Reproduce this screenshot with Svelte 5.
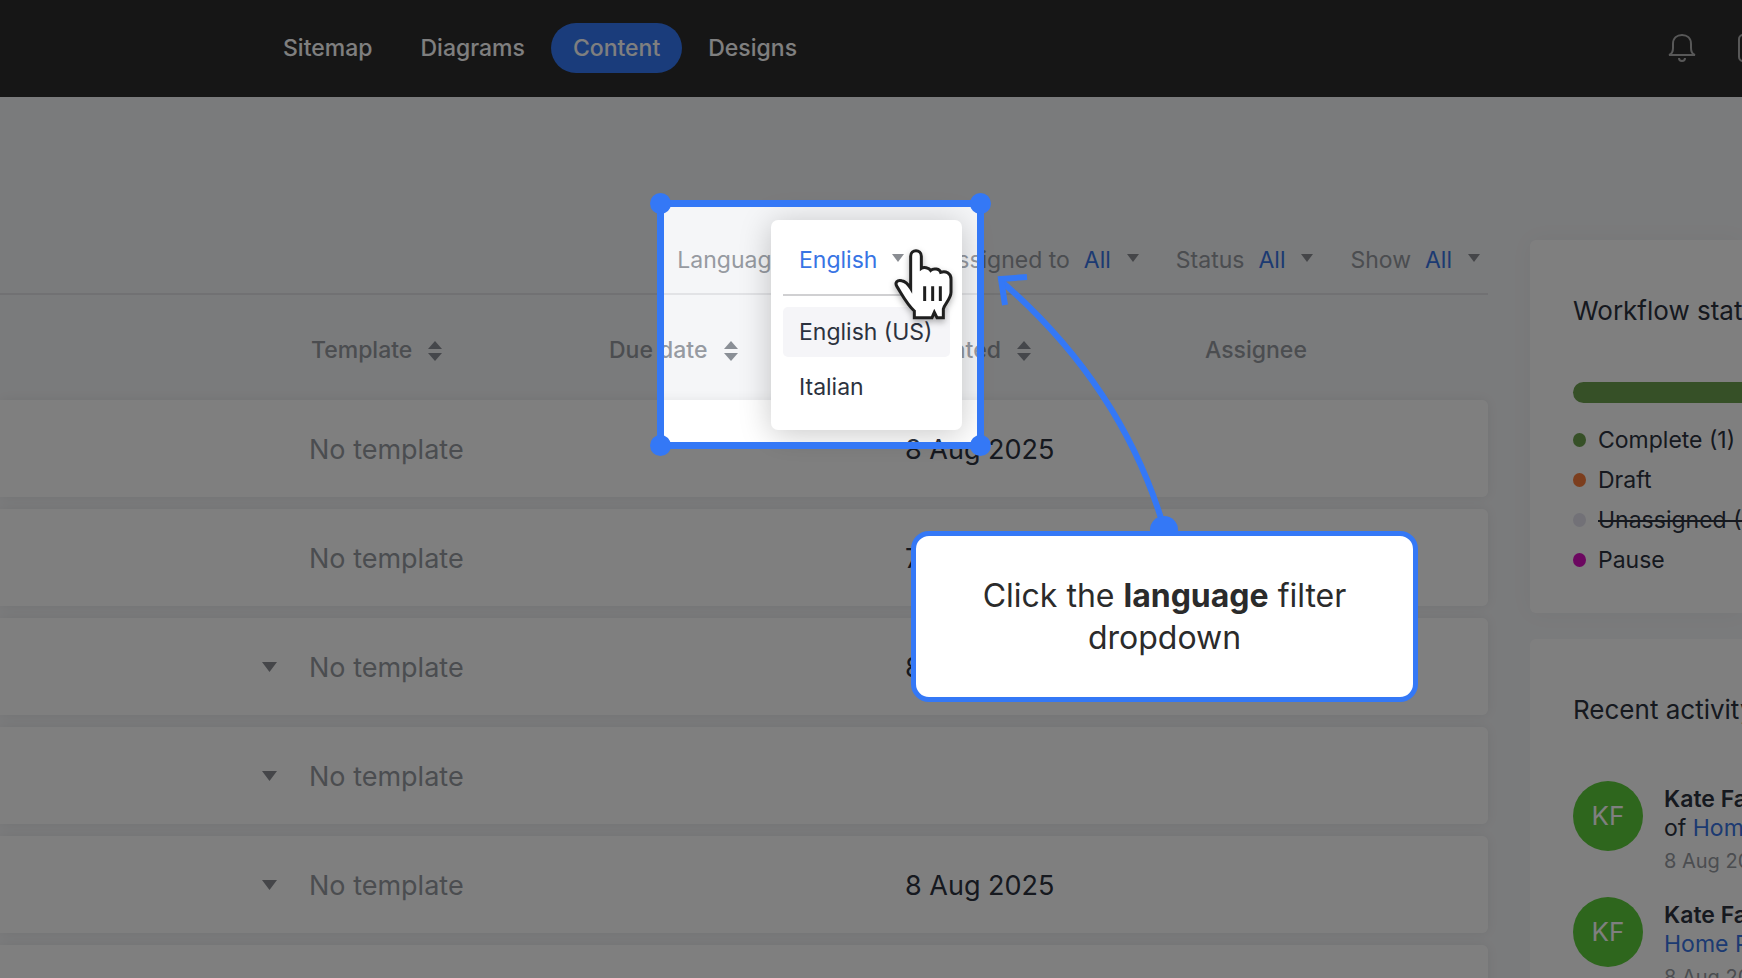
<script lang="ts">
	const NAV = ['Sitemap', 'Diagrams', 'Content', 'Designs'];
	const FILTERS = [
		{ id: 'assigned', label: 'Assigned to' },
		{ id: 'status', label: 'Status' },
		{ id: 'show', label: 'Show' }
	];
	const LANGUAGES = ['English (US)', 'Italian'];

	const ROWS = [
		{ nested: false, updated: '8 Aug 2025' },
		{ nested: false, updated: '7 Aug 2025' },
		{ nested: true, updated: '8 Aug 2025' },
		{ nested: true, updated: '' },
		{ nested: true, updated: '8 Aug 2025' },
		{ nested: false, updated: '' }
	];

	const STATUSES = [
		{ name: 'Complete (1)', color: '#6ca04e', off: false },
		{ name: 'Draft', color: '#f97d3c', off: false },
		{ name: 'Unassigned (4)', color: '#e4e3ee', off: true },
		{ name: 'Pause', color: '#d80fc0', off: false }
	];

	const ACTIVITY = [
		{ who: 'Kate Fa', before: 'of ', page: 'Home', date: '8 Aug 2025' },
		{ who: 'Kate Fa', before: '', page: 'Home Page', date: '8 Aug 2025' }
	];

	let tab = $state('Content');
	let hovered = $state('English (US)');
</script>

{#snippet caret()}
	<svg class="caret" viewBox="0 0 12 8" aria-hidden="true"><path d="M0 0H12L6 8Z" /></svg>
{/snippet}

{#snippet sort()}
	<svg class="sort" viewBox="0 0 14 20" aria-hidden="true">
		<path d="M0 8L7 0L14 8ZM0 12H14L7 20Z" />
	</svg>
{/snippet}

<div class="stage">
	<header>
		<nav>
			{#each NAV as item (item)}
				<button type="button" class:on={tab === item} onclick={() => (tab = item)}>{item}</button>
			{/each}
		</nav>
		<div class="tools">
			<button type="button" aria-label="Notifications">
				<svg viewBox="0 0 28 30">
					<path d="M1 22C4 21 5 19 5 15V11C5 5 9 2 14 2S23 5 23 11V15C23 19 24 21 27 22Z" />
					<path d="M11 25C11 29 17 29 17 25" />
				</svg>
			</button>
			<button type="button" aria-label="Comments">
				<svg viewBox="0 0 28 30"><rect x="1" y="2" width="26" height="26" rx="4" /></svg>
			</button>
		</div>
	</header>

	<div class="layout">
		<main>
			<div class="filters">
				<div class="filter">
					<span id="language-label">Language</span>
					<div class="language">
						<button type="button" class="value" aria-labelledby="language-label" aria-expanded="true">
							English {@render caret()}
						</button>
						<div class="menu">
							<ul role="listbox" aria-labelledby="language-label">
								{#each LANGUAGES as lang (lang)}
									<li role="option" aria-selected={hovered === lang} class:on={hovered === lang}>
										<button type="button" onmouseenter={() => (hovered = lang)}>{lang}</button>
									</li>
								{/each}
							</ul>
						</div>
					</div>
				</div>
				{#each FILTERS as f (f.id)}
					<div class="filter">
						<label for={f.id}>{f.label}</label>
						<div class="value">
							<select id={f.id}><option>All</option></select>
							{@render caret()}
						</div>
					</div>
				{/each}
			</div>

			<table>
				<colgroup>
					<col />
					<col class="c-template" />
					<col class="c-due" />
					<col class="c-updated" />
					<col class="c-assignee" />
				</colgroup>
				<thead>
					<tr>
						<th></th>
						<th>Template {@render sort()}</th>
						<th>Due date {@render sort()}</th>
						<th>Updated {@render sort()}</th>
						<th>Assignee</th>
					</tr>
				</thead>
				<tbody>
					{#each ROWS as row, i (i)}
						<tr>
							<td class="toggle">{#if row.nested}{@render caret()}{/if}</td>
							<td class="muted">No template</td>
							<td></td>
							<td>{row.updated}</td>
							<td></td>
						</tr>
					{/each}
				</tbody>
			</table>
		</main>

		<aside>
			<section>
				<h2>Workflow status</h2>
				<div class="progress"></div>
				<ul class="legend">
					{#each STATUSES as s (s.name)}
						<li class:off={s.off}>
							<i style="background: {s.color}"></i><span>{s.name}</span>
						</li>
					{/each}
				</ul>
			</section>
			<section>
				<h2>Recent activity</h2>
				{#each ACTIVITY as a, i (i)}
					<div class="event">
						<div class="avatar">KF</div>
						<div>
							<strong>{a.who}</strong>
							<p>{a.before}<a href="#home">{a.page}</a></p>
							<time>{a.date}</time>
						</div>
					</div>
				{/each}
			</section>
		</aside>
	</div>

	<!-- guided tour: spotlight, arrow and callout, all measured from the right edge -->
	<div class="spotlight">
		<b></b><b></b><b></b><b></b>
	</div>
	<svg class="arrow" viewBox="0 0 190 280" aria-hidden="true">
		<path d="M174 258C144 156 86 76 11 11" />
		<path d="M37 7L11 9L15 35" />
		<circle cx="174" cy="260" r="14" />
	</svg>
	<div class="callout" role="dialog" aria-label="Tour step">
		<p>Click the <strong>language</strong> filter dropdown</p>
	</div>
	<svg class="hand" viewBox="760 200 186 225" aria-hidden="true">
		<path
			class="shape"
			d="M813 312V228C813 206 845 206 845 228V264C852 259 868 262 873 270C882 262 900 266 903 276C918 270 934 279 934 296V336C934 356 914 371 911 386V412H892L884 396L877 412H824V392C800 370 788 344 772 319C764 306 773 298 786 301C798 303 807 314 813 324Z"
		/>
		<path class="lines" d="M855 318V362M879 318V362M902 318V362" />
	</svg>
</div>

<style>
	:global(body) {
		background: #f5f6f8;
	}
	.stage {
		--blue: #3478f6;
		--link: #3874e4;
		--muted: #969aa1;
		--ink: #2c323e;
		position: relative;
		height: 100vh;
		overflow: hidden;
		font-family: Inter, sans-serif;
		font-size: 23px;
		line-height: 32px;
		color: var(--ink);
	}
	button,
	select {
		font: inherit;
		color: inherit;
		background: none;
		border: 0;
		padding: 0;
		cursor: pointer;
	}
	ul {
		list-style: none;
		margin: 0;
		padding: 0;
	}
	p {
		margin: 0;
	}
	header {
		display: flex;
		align-items: center;
		justify-content: space-between;
		box-sizing: border-box;
		height: 97px;
		padding-bottom: 2px;
		background: #2c2c2c;
	}
	nav {
		display: flex;
		gap: 4px;
		padding-left: 261px;
	}
	nav button {
		padding: 9px 22px;
		border-radius: 25px;
		font-weight: 500;
		color: #fff;
	}
	nav button.on {
		background: var(--blue);
	}
	.tools {
		display: flex;
		gap: 42px;
		width: 74px;
		overflow: hidden;
	}
	.tools button {
		flex: none;
		height: 30px;
	}
	.tools svg {
		display: block;
		width: 28px;
		height: 30px;
		fill: none;
		stroke: #b0b0b0;
		stroke-width: 2;
	}
	.layout {
		display: flex;
		gap: 42px;
	}
	main {
		flex: 1;
		min-width: 0;
		padding-top: 147px;
	}
	.caret {
		flex: none;
		width: 12px;
		height: 8px;
		fill: #8a8d92;
	}
	.sort {
		width: 14px;
		height: 20px;
		margin-left: 10px;
		vertical-align: -3px;
		fill: #8a8f96;
	}
	.filters {
		display: flex;
		justify-content: flex-end;
		gap: 37px;
		padding: 0 8px 17px 0;
		border-bottom: 2px solid #e2e3e6;
		color: var(--muted);
	}
	.filter {
		display: flex;
		gap: 14px;
	}
	.value {
		display: flex;
		align-items: center;
		gap: 15px;
		color: var(--link);
	}
	.value .caret {
		margin-bottom: 4px;
	}
	select {
		appearance: none;
	}
	.language {
		position: relative;
	}
	.language .value {
		position: relative;
		z-index: 1;
	}
	.menu {
		position: absolute;
		top: -24px;
		left: -28px;
		width: 191px;
		box-sizing: border-box;
		padding: 74px 12px 13px;
		border-radius: 7px;
		background: #fff;
		box-shadow: 0 4px 32px rgba(0, 0, 0, 0.22);
	}
	.menu ul {
		padding-top: 11px;
		border-top: 2px solid #d0d0d2;
	}
	.menu li {
		margin-bottom: 5px;
		border-radius: 5px;
	}
	.menu li.on {
		background: #f5f5f8;
	}
	.menu li button {
		width: 100%;
		padding: 9px 16px;
		text-align: left;
		white-space: nowrap;
		color: var(--ink);
	}
	table {
		width: 100%;
		table-layout: fixed;
		border-spacing: 0 12px;
	}
	.c-template,
	.c-due,
	.c-updated {
		width: 298px;
	}
	.c-assignee {
		width: 285px;
	}
	th {
		height: 77px;
		padding: 4px 0 0 2px;
		text-align: left;
		font-weight: 500;
		color: var(--muted);
		white-space: nowrap;
	}
	tbody tr {
		border-radius: 6px;
		box-shadow: 0 0 12px rgba(0, 0, 0, 0.07);
	}
	td {
		height: 95px;
		padding: 2px 0 0;
		background: #fff;
		font-size: 27px;
	}
	td:last-child {
		border-radius: 0 6px 6px 0;
	}
	td.muted {
		color: var(--muted);
	}
	td.toggle {
		padding-right: 32px;
		text-align: right;
	}
	.toggle .caret {
		width: 15px;
		height: 10px;
		vertical-align: 5px;
	}
	aside {
		flex: 0 0 212px;
		display: grid;
		gap: 26px;
		align-content: start;
		padding-top: 143px;
		white-space: nowrap;
	}
	section {
		padding: 53px 0 37px 43px;
		overflow: hidden;
		border-radius: 6px 0 0 6px;
		background: #fff;
	}
	section:first-child {
		box-shadow: 0 0 24px rgba(0, 0, 0, 0.04);
	}
	h2 {
		margin: 0 0 53px;
		font-size: 26px;
		font-weight: 400;
		line-height: 36px;
	}
	.progress {
		height: 21px;
		margin-bottom: 17px;
		border-radius: 11px 0 0 11px;
		background: #6ca04e;
	}
	.legend {
		display: grid;
		gap: 8px;
		padding-top: 4px;
	}
	.legend li {
		display: flex;
		align-items: center;
		gap: 12px;
	}
	.legend i {
		flex: none;
		width: 13px;
		height: 14px;
		border-radius: 50%;
	}
	.off span {
		text-decoration: line-through;
	}
	.event {
		display: flex;
		gap: 21px;
		height: 116px;
		line-height: 29px;
	}
	.event strong {
		font-weight: 600;
		display: block;
		margin-top: 4px;
	}
	.event time {
		display: block;
		margin-top: 4px;
		font-size: 20px;
		color: var(--muted);
	}
	.avatar {
		flex: none;
		width: 70px;
		height: 70px;
		border-radius: 50%;
		background: #5ccc3a;
		color: #fff;
		font-size: 26px;
		line-height: 70px;
		text-align: center;
	}
	a {
		color: var(--link);
		text-decoration: none;
	}
	.spotlight {
		position: absolute;
		top: 200px;
		right: 758px;
		width: 313px;
		height: 235px;
		border: 7px solid var(--blue);
		box-shadow: 0 0 0 2000px rgba(0, 0, 0, 0.5);
		z-index: 2;
	}
	.spotlight b {
		position: absolute;
		width: 21px;
		height: 21px;
		border-radius: 50%;
		background: var(--blue);
	}
	.spotlight b:nth-child(odd) {
		left: -14px;
	}
	.spotlight b:nth-child(even) {
		right: -14px;
	}
	.spotlight b:nth-child(-n + 2) {
		top: -14px;
	}
	.spotlight b:nth-child(n + 3) {
		bottom: -14px;
	}
	.arrow {
		position: absolute;
		top: 270px;
		right: 562px;
		width: 190px;
		height: 280px;
		fill: none;
		stroke: var(--blue);
		stroke-width: 6;
		z-index: 2;
	}
	.arrow circle {
		fill: var(--blue);
		stroke: none;
	}
	.callout {
		position: absolute;
		top: 531px;
		right: 324px;
		width: 507px;
		box-sizing: border-box;
		padding: 39px 50px 38px;
		border: 5px solid var(--blue);
		border-radius: 18px;
		background: #fff;
		color: #2b2b2b;
		font-size: 32px;
		line-height: 42px;
		text-align: center;
		z-index: 3;
	}
	.hand {
		position: absolute;
		top: 247px;
		right: 787px;
		width: 62px;
		height: 75px;
		filter: drop-shadow(0 3px 3px rgba(0, 0, 0, 0.3));
		z-index: 3;
	}
	.hand .shape {
		fill: #fff;
		stroke: #1f1f1f;
		stroke-width: 9;
	}
	.hand .lines {
		stroke: #1f1f1f;
		stroke-width: 9;
	}
</style>
